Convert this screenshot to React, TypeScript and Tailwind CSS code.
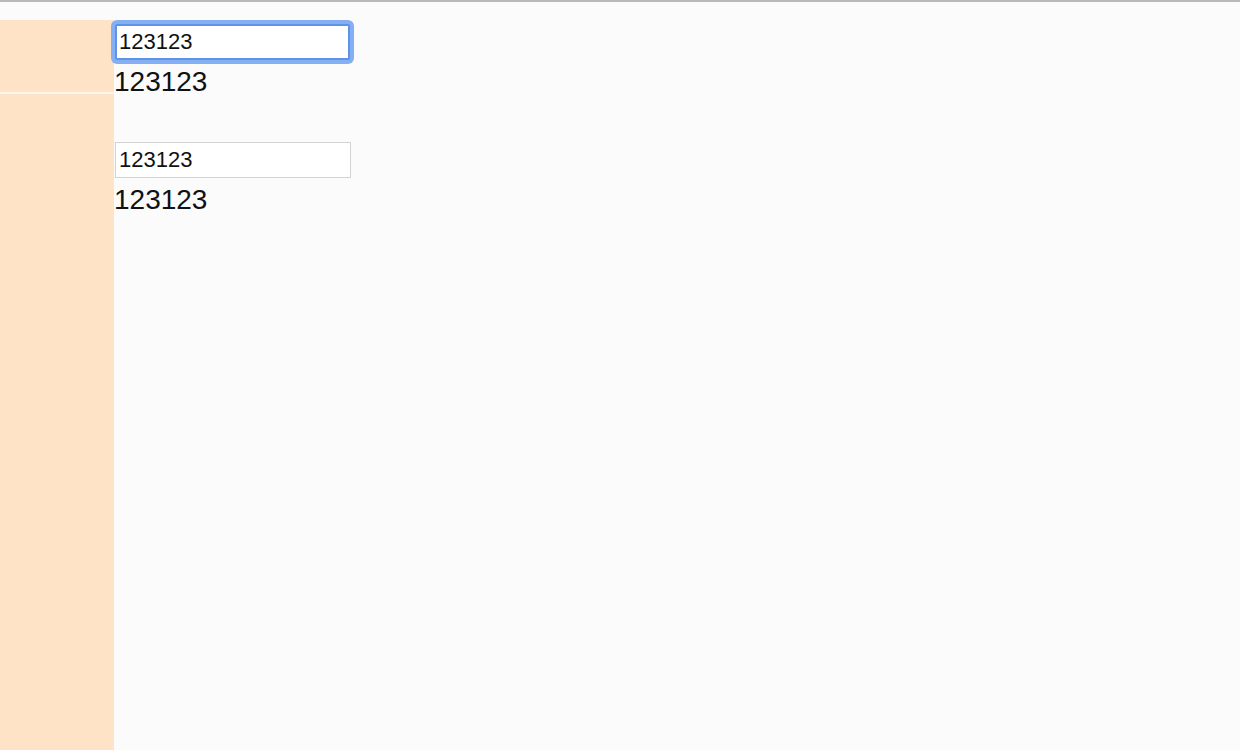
import React from "react";

export default function App() {
  return (
    <div className="w-[1240px] h-[750px] overflow-hidden bg-[#fbfbfb] border-t-2 border-[#b9b9b9] font-['Liberation_Sans',Arial,sans-serif] text-[#111]">
      <div className="flex mt-[18px] h-[730px]">
        <div className="w-[114px] shrink-0 flex flex-col bg-[#ffe3c6]">
          <div className="h-[74px] border-b-[2px] border-[#fff6ee]" />
          <div className="flex-1" />
        </div>
        <div className="flex flex-col pt-[4px]">
          <div className="w-fit ml-[-3px] mt-[-4px] mb-[-4px] p-[4px] rounded-[6px] bg-[#85aff3]">
            <input
              readOnly
              value="123123"
              className="block w-[235px] h-[36px] px-[2px] text-[22px] leading-none bg-white border-2 border-[#5f93ea] rounded-[2px] outline-none font-['Liberation_Sans',Arial,sans-serif] text-[#111]"
            />
          </div>
          <div className="mt-[6px] text-[28px] leading-[32px]">123123</div>
          <input
            readOnly
            value="123123"
            className="mt-[44px] ml-[1px] w-[236px] h-[36px] px-[3px] text-[22px] leading-none bg-white border border-[#d3d3d3] outline-none font-['Liberation_Sans',Arial,sans-serif] text-[#111]"
          />
          <div className="mt-[6px] text-[28px] leading-[32px]">123123</div>
        </div>
      </div>
    </div>
  );
}
